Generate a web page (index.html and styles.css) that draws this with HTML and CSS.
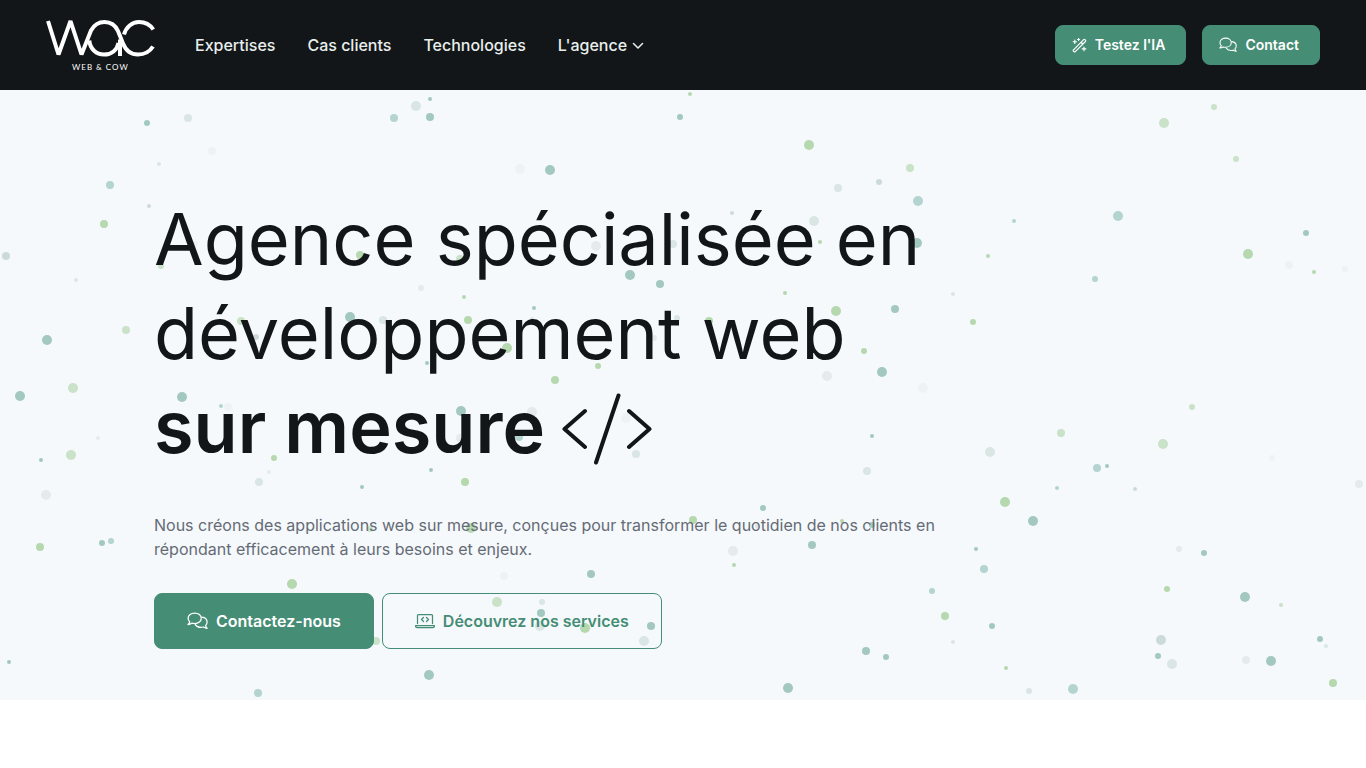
FILE: index.html
```html
<!DOCTYPE html>
<html lang="fr">
<head>
<meta charset="utf-8">
<meta name="viewport" content="width=device-width, initial-scale=1">
<title>Web &amp; Cow</title>
<link rel="stylesheet" href="styles.css">
</head>
<body>
<svg class="sprite" aria-hidden="true">
  <symbol id="comments" viewBox="0 0 21 18">
    <path d="M7.7 1C4 1 1.100 3.300 1.100 6.300c0 1.400.6 2.600 1.600 3.500-.2 1-.8 1.900-1.700 2.700 1.500 0 2.800-.5 3.800-1.300.9.300 1.900.4 2.900.4 3.700 0 6.600-2.300 6.600-5.300S11.400 1 7.700 1z"/>
    <path d="M14.900 5.100c3 .3 5.200 2.400 5.200 5 0 1.400-.6 2.600-1.500 3.500.2 1 .7 1.900 1.500 2.700-1.400 0-2.600-.5-3.600-1.300-.9.300-1.800.4-2.700.4-2.400 0-4.500-1.100-5.500-2.800"/>
  </symbol>
  <symbol id="wand" viewBox="0 0 16 16">
    <path d="M1.600 12.600 12.400 1.800a1 1 0 0 1 1.400 0l.5.5a1 1 0 0 1 0 1.400L3.500 14.500a1 1 0 0 1-1.400 0l-.5-.5a1 1 0 0 1 0-1.400zM9.700 4.500l1.900 1.900M3 2.200v3.600M1.200 4h3.600M7 .6v2M6 1.600h2M12.800 9.600v4M10.800 11.600h4"/>
  </symbol>
  <symbol id="laptop" viewBox="0 0 20 16">
    <path d="M2.500 10.500V2.500a1 1 0 0 1 1-1h13a1 1 0 0 1 1 1v8M.6 12.500h18.800v.5a1.500 1.500 0 0 1-1.500 1.500H2.100A1.500 1.500 0 0 1 .6 13zM8.500 4.500l-2 2 2 2M11.500 4.500l2 2-2 2"/>
  </symbol>
</svg>

<header class="header">
  <a class="logo" href="#" aria-label="Web &amp; Cow">
    <svg width="110" height="52" viewBox="0 0 110 52">
      <g class="logo-lines">
        <path d="M2 2l10.500 33.500L24.500 2l11 33.500L45 11.500C48 6 52.500 3 58.500 3c6.500 0 11 3.500 13.500 9l5 12.500c3 7.500 8.500 11 15 11s11.500-2.500 15-8"/>
        <path d="M43.300 21.500C44 30 50.500 35.600 58 35.600c7.500 0 13-4.600 14.500-11.600"/>
        <path d="M74 20.500V37"/>
        <path d="M78 15.500C80 8 86 3 93 3c6 0 11 2.500 14.300 7.500"/>
      </g>
      <text class="logo-text" x="26" y="51">WEB &amp; COW</text>
    </svg>
  </a>
  <nav class="nav">
    <a href="#">Expertises</a>
    <a href="#">Cas clients</a>
    <a href="#">Technologies</a>
    <a class="nav-more" href="#">L'agence
      <svg width="12" height="8" viewBox="0 0 12 8"><path d="M1.500 2.500 6 7l4.500-4.500"/></svg>
    </a>
  </nav>
  <div class="header-actions">
    <a class="btn btn-small" href="#"><svg width="15" height="15"><use href="#wand"/></svg>Testez l'IA</a>
    <a class="btn btn-small" href="#"><svg width="18" height="16"><use href="#comments"/></svg>Contact</a>
  </div>
</header>

<main class="hero">
  <svg class="particles" aria-hidden="true">
    <g class="teal">
      <circle cx="147" cy="123" r="3"/><circle cx="430" cy="99" r="2"/><circle cx="430" cy="117" r="4"/><circle cx="680" cy="117" r="3"/>
      <circle cx="550" cy="170" r="5"/><circle cx="630" cy="275" r="5"/><circle cx="660" cy="284" r="4"/><circle cx="534" cy="308" r="2"/>
      <circle cx="895" cy="309" r="4"/><circle cx="882" cy="372" r="5"/><circle cx="917" cy="243" r="5"/><circle cx="1306" cy="233" r="3"/>
      <circle cx="350" cy="317" r="5"/><circle cx="427" cy="363" r="2"/><circle cx="20" cy="396" r="5"/><circle cx="182" cy="397" r="5"/>
      <circle cx="41" cy="460" r="2"/><circle cx="362" cy="487" r="2"/><circle cx="431" cy="470" r="2"/><circle cx="102" cy="543" r="3"/>
      <circle cx="9" cy="662" r="2"/><circle cx="429" cy="675" r="5"/><circle cx="461" cy="411" r="5"/><circle cx="872" cy="436" r="2"/>
      <circle cx="763" cy="508" r="3"/><circle cx="812" cy="545" r="4"/><circle cx="591" cy="574" r="4"/><circle cx="541" cy="613" r="4"/>
      <circle cx="651" cy="626" r="4"/><circle cx="866" cy="651" r="4"/><circle cx="886" cy="657" r="3"/><circle cx="788" cy="688" r="5"/>
      <circle cx="1107" cy="466" r="2"/><circle cx="1033" cy="521" r="5"/><circle cx="976" cy="549" r="2"/><circle cx="992" cy="626" r="3"/>
      <circle cx="1204" cy="553" r="3"/><circle cx="1245" cy="597" r="5"/><circle cx="1158" cy="656" r="3"/><circle cx="1271" cy="661" r="5"/>
      <circle cx="1320" cy="639" r="3"/><circle cx="872" cy="525" r="3"/><circle cx="47" cy="340" r="5"/>
    </g>
    <g class="aqua">
      <circle cx="394" cy="118" r="4"/><circle cx="110" cy="185" r="4"/><circle cx="918" cy="201" r="5"/><circle cx="1014" cy="221" r="2"/>
      <circle cx="1095" cy="279" r="3"/><circle cx="221" cy="406" r="2"/><circle cx="111" cy="541" r="3"/><circle cx="258" cy="693" r="4"/>
      <circle cx="519" cy="437" r="4"/><circle cx="1097" cy="468" r="4"/><circle cx="1057" cy="488" r="2"/><circle cx="984" cy="569" r="4"/>
      <circle cx="932" cy="591" r="3"/><circle cx="1073" cy="689" r="5"/><circle cx="1118" cy="216" r="5"/>
    </g>
    <g class="green">
      <circle cx="690" cy="94" r="2"/><circle cx="809" cy="145" r="5"/><circle cx="104" cy="224" r="4"/><circle cx="360" cy="255" r="4"/>
      <circle cx="820" cy="242" r="2"/><circle cx="785" cy="293" r="2"/><circle cx="464" cy="297" r="2"/><circle cx="468" cy="320" r="4"/>
      <circle cx="507" cy="348" r="5"/><circle cx="598" cy="366" r="3"/><circle cx="555" cy="380" r="4"/><circle cx="836" cy="311" r="5"/>
      <circle cx="864" cy="351" r="3"/><circle cx="709" cy="321" r="4"/><circle cx="988" cy="256" r="2"/><circle cx="973" cy="322" r="3"/>
      <circle cx="1248" cy="254" r="5"/><circle cx="1314" cy="272" r="2"/><circle cx="274" cy="458" r="3"/><circle cx="40" cy="547" r="4"/>
      <circle cx="292" cy="584" r="5"/><circle cx="465" cy="482" r="4"/><circle cx="471" cy="528" r="5"/><circle cx="693" cy="520" r="4"/>
      <circle cx="734" cy="565" r="2"/><circle cx="585" cy="628" r="5"/><circle cx="842" cy="521" r="2"/><circle cx="1005" cy="502" r="5"/>
      <circle cx="945" cy="616" r="4"/><circle cx="1006" cy="668" r="2"/><circle cx="1167" cy="589" r="3"/><circle cx="1333" cy="683" r="4"/>
    </g>
    <g class="lime">
      <circle cx="910" cy="168" r="4"/><circle cx="1164" cy="123" r="5"/><circle cx="1214" cy="107" r="3"/><circle cx="1236" cy="159" r="3"/>
      <circle cx="161" cy="266" r="3"/><circle cx="126" cy="330" r="4"/><circle cx="241" cy="321" r="4"/><circle cx="73" cy="388" r="5"/>
      <circle cx="71" cy="455" r="5"/><circle cx="376" cy="641" r="4"/><circle cx="497" cy="602" r="5"/><circle cx="370" cy="529" r="3"/>
      <circle cx="1061" cy="433" r="4"/><circle cx="1163" cy="444" r="5"/><circle cx="1192" cy="407" r="3"/><circle cx="1281" cy="605" r="2"/>
      <circle cx="460" cy="259" r="4"/>
    </g>
    <g class="slate">
      <circle cx="6" cy="256" r="4"/><circle cx="149" cy="206" r="2"/><circle cx="879" cy="182" r="3"/><circle cx="732" cy="213" r="2"/>
      <circle cx="1135" cy="489" r="2"/><circle cx="1161" cy="640" r="5"/><circle cx="256" cy="337" r="3"/>
    </g>
    <g class="mist">
      <circle cx="188" cy="118" r="4"/><circle cx="416" cy="106" r="5"/><circle cx="159" cy="164" r="2"/><circle cx="76" cy="280" r="2"/>
      <circle cx="383" cy="320" r="4"/><circle cx="838" cy="188" r="4"/><circle cx="814" cy="221" r="5"/><circle cx="673" cy="244" r="4"/>
      <circle cx="532" cy="319" r="2"/><circle cx="677" cy="318" r="3"/><circle cx="259" cy="482" r="4"/><circle cx="636" cy="454" r="4"/>
      <circle cx="867" cy="471" r="4"/><circle cx="542" cy="602" r="3"/><circle cx="540" cy="626" r="5"/><circle cx="644" cy="641" r="5"/>
      <circle cx="990" cy="452" r="5"/><circle cx="953" cy="294" r="2"/><circle cx="953" cy="642" r="2"/><circle cx="1029" cy="691" r="3"/>
      <circle cx="1172" cy="664" r="5"/><circle cx="1326" cy="646" r="2"/><circle cx="329" cy="554" r="2"/><circle cx="757" cy="526" r="2"/>
    </g>
    <g class="fog">
      <circle cx="596" cy="246" r="5"/><circle cx="421" cy="288" r="3"/><circle cx="654" cy="338" r="3"/><circle cx="827" cy="376" r="5"/>
      <circle cx="46" cy="495" r="5"/><circle cx="269" cy="472" r="2"/><circle cx="532" cy="412" r="5"/><circle cx="460" cy="438" r="4"/>
      <circle cx="733" cy="551" r="5"/><circle cx="1179" cy="549" r="3"/><circle cx="1246" cy="660" r="4"/><circle cx="1359" cy="484" r="4"/>
      <circle cx="98" cy="438" r="2"/>
    </g>
    <g class="haze">
      <circle cx="212" cy="151" r="4"/><circle cx="520" cy="169" r="5"/><circle cx="195" cy="244" r="3"/><circle cx="504" cy="576" r="4"/>
      <circle cx="626" cy="418" r="5"/><circle cx="1289" cy="265" r="4"/><circle cx="1345" cy="269" r="3"/><circle cx="923" cy="388" r="5"/>
      <circle cx="1272" cy="458" r="3"/><circle cx="228" cy="407" r="4"/>
    </g>
  </svg>
  <div class="hero-content">
    <h1>Agence spécialisée en développement web <span class="last-line"><strong>sur mesure</strong>
      <svg class="code-icon" width="90" height="76" viewBox="0 -4 90 76" aria-hidden="true"><path d="M23 18 2.500 36 23 54M56.500 2.500 34 69.500M67 18l20.500 18L67 54"/></svg></span></h1>
    <p>Nous créons des applications web sur mesure, conçues pour transformer le quotidien de nos clients en répondant efficacement à leurs besoins et enjeux.</p>
    <div class="hero-actions">
      <a class="btn btn-large" href="#"><svg width="21" height="18"><use href="#comments"/></svg>Contactez-nous</a>
      <a class="btn btn-large btn-outline" href="#"><svg width="20" height="16"><use href="#laptop"/></svg>Découvrez nos services</a>
    </div>
  </div>
</main>
</body>
</html>
```

FILE: styles.css
```css
* {
  box-sizing: border-box;
}

body {
  margin: 0;
  background: #fff;
  color: #121619;
  font-family: Inter, "Liberation Sans", sans-serif;
  font-size: 16px;
  line-height: 24px;
}

a {
  color: inherit;
  text-decoration: none;
}

.sprite {
  position: absolute;
  width: 0;
  height: 0;
}

.sprite path,
.nav-more path {
  fill: none;
  stroke: currentColor;
  stroke-width: 1.25;
  stroke-linecap: round;
  stroke-linejoin: round;
}

.header {
  display: flex;
  align-items: center;
  min-height: 90px;
  padding: 0 46px;
  background: #121619;
  color: #e9efec;
}

.logo {
  display: flex;
  margin-right: 39px;
}

.logo-lines {
  fill: none;
  stroke: #fff;
  stroke-width: 4;
  stroke-linejoin: bevel;
}

.logo-text {
  fill: #fff;
  font-family: Lato, sans-serif;
  font-size: 8px;
  letter-spacing: 1px;
}

.nav {
  display: flex;
  gap: 32px;
  font-weight: 500;
}

.nav-more {
  display: flex;
  align-items: center;
  gap: 5px;
}

.nav-more path {
  stroke-width: 1.5;
}

.header-actions {
  display: flex;
  gap: 16px;
  margin-left: auto;
}

.btn {
  display: flex;
  align-items: center;
  gap: 8px;
  border: 1px solid #458d74;
  border-radius: 8px;
  background: #458d74;
  color: #fff;
  font-weight: 600;
}

.btn-small {
  padding: 7px 20px 7px 16px;
  font-size: 14px;
}

.btn-large {
  padding: 15px 32px;
}

.btn-outline {
  background: transparent;
  color: #458d74;
}

.hero {
  position: relative;
  padding: 102px 154px 51px;
  background: #f5f9fc;
}

.particles {
  position: absolute;
  top: -90px;
  left: 0;
  width: 100%;
  height: calc(100% + 90px);
  pointer-events: none;
}

.teal { fill: #a3c8bf; }
.aqua { fill: #b3d4d0; }
.green { fill: #b5d8ae; }
.lime { fill: #c9e2c8; }
.slate { fill: #cddada; }
.mist { fill: #dae6e4; }
.fog { fill: #e5ebeb; }
.haze { fill: #eef2f5; }

.hero-content {
  position: relative;
  max-width: 800px;
}

h1 {
  margin: 0 0 39px;
  font-size: 72px;
  font-weight: 400;
  line-height: 94px;
}

.last-line {
  display: flex;
  align-items: center;
  gap: 17px;
}

h1 strong {
  font-weight: 600;
}

.code-icon {
  fill: none;
  stroke: #121619;
  stroke-width: 4;
  stroke-linecap: round;
  stroke-linejoin: round;
}

p {
  margin: 0 0 32px;
  color: #656b75;
}

.hero-actions {
  display: flex;
  flex-wrap: wrap;
  gap: 8px;
}
```
